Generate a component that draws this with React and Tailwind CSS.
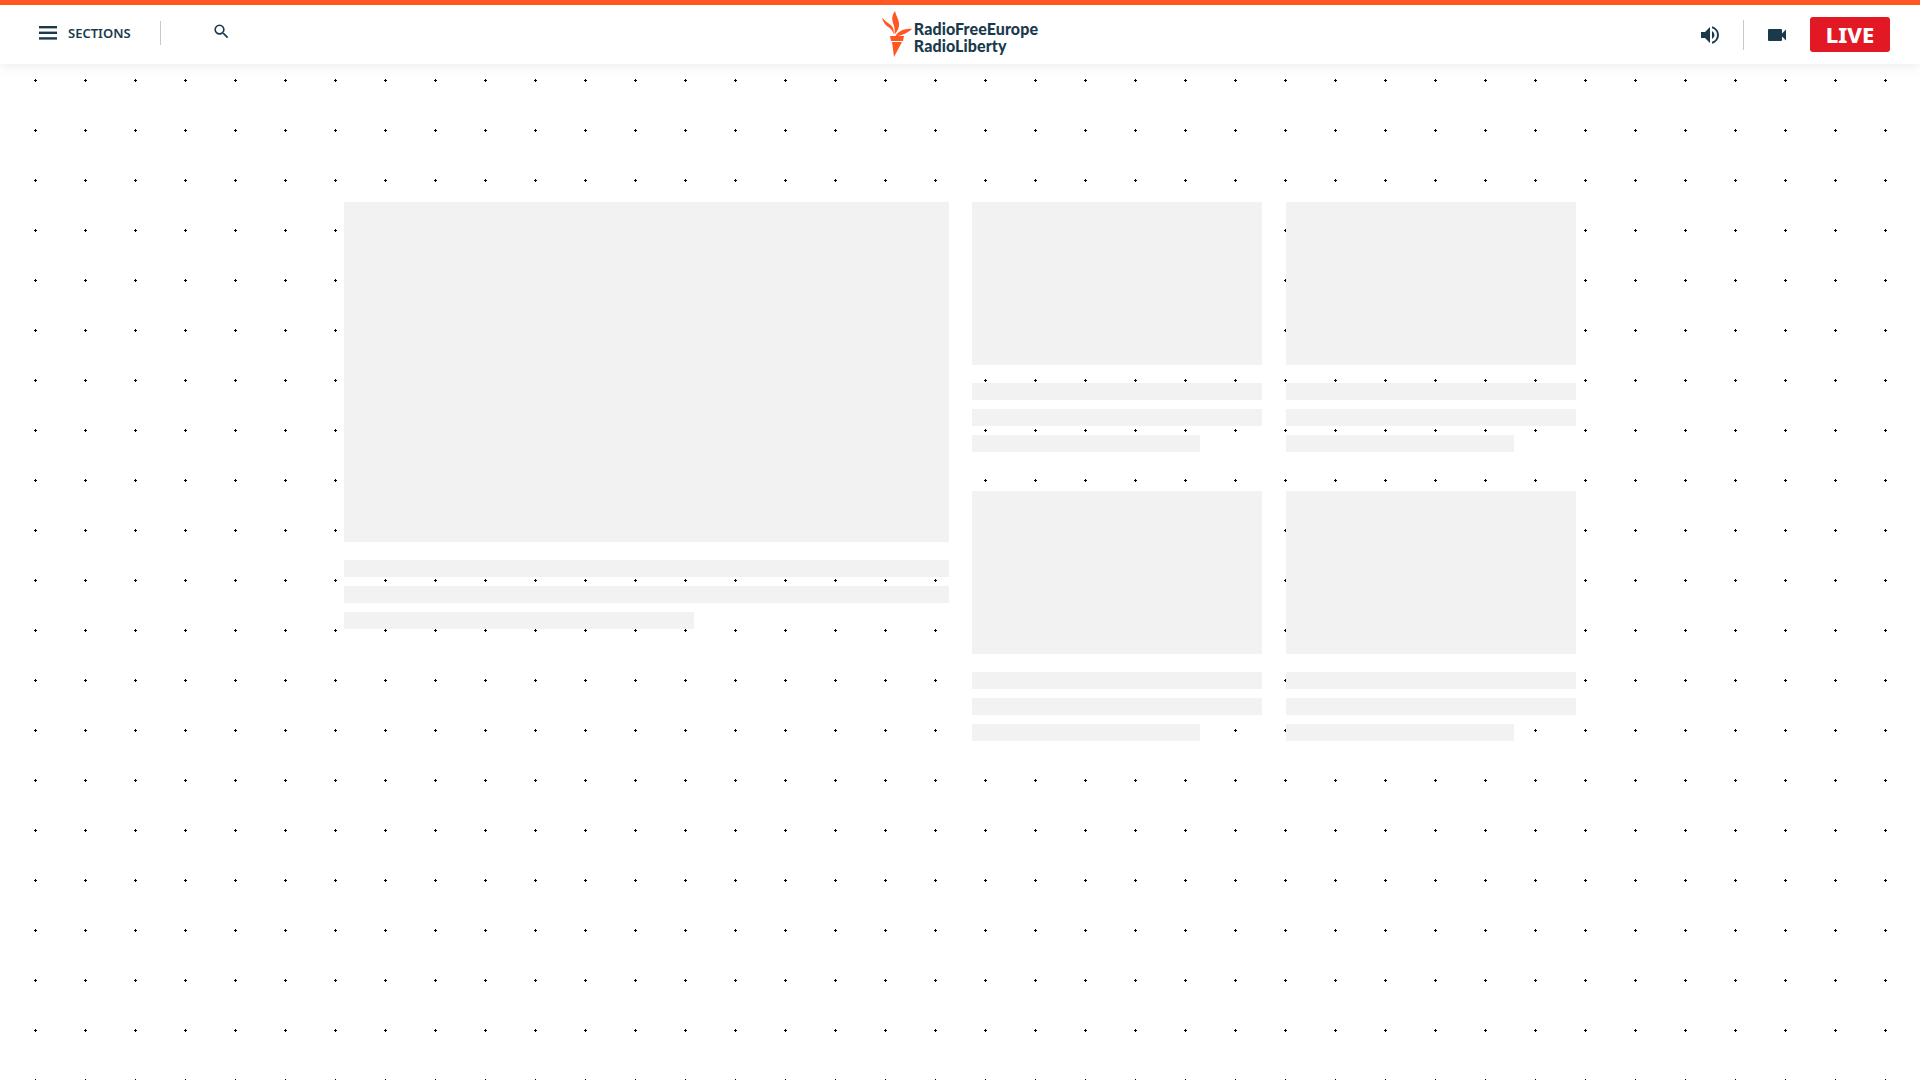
const TextBars = ({ short }) => (
  <div className="mt-[18px] flex flex-col gap-[9px]">
    <div className="h-[17px] bg-[#f2f2f2]" />
    <div className="h-[17px] bg-[#f2f2f2]" />
    <div className={`h-[17px] bg-[#f2f2f2] ${short}`} />
  </div>
);

const Card = () => (
  <div className="w-[290px]">
    <div className="h-[163px] bg-[#f2f2f2]" />
    <TextBars short="w-[228px]" />
  </div>
);

const Logo = () => (
  <div className="flex items-center gap-[2px]">
    <svg width="30" height="46" viewBox="0 0 30 46" className="-mt-[2px] shrink-0" fill="#ff5722">
      <path d="M13 0C10 4 9.5 8 11 12C12.5 15.5 13 19 12.5 23.5C15.5 20.5 17.5 16.5 17 12C16.5 8 14 4.5 13 0Z" />
      <path d="M0 6.5C1 11 3.5 14.5 7 16.5C9.5 18 11 20.5 11.5 23.5C12.5 19.5 11 15.5 8 13.5C5.5 11.5 2.5 9.5 0 6.5Z" />
      <path d="M30 18C25 17.5 21 18.5 18 20.5C16 21.5 14.5 23 13.5 25C18 25 23 23.5 30 18Z" />
      <path d="M8 25H22L21 30H9Z" />
      <path d="M10 31H20L12 46Z" />
    </svg>
    <div className="pt-[5px] font-['Lato',sans-serif] text-[16px] leading-[17px] font-black text-[#1a3a4c] tracking-[0.1px]">
      <div>RadioFreeEurope</div>
      <div>RadioLiberty</div>
    </div>
  </div>
);

export default function App() {
  return (
    <div className="min-h-[1080px] bg-white bg-[radial-gradient(circle_at_35.5px_30.5px,#000_1.2px,transparent_1.2px)] bg-[size:50px_50px] font-['Noto_Sans',sans-serif]">
      <header className="grid h-[64px] grid-cols-[1fr_auto_1fr] items-center border-t-[5px] border-[#ff5722] bg-white px-[30px] shadow-[0_2px_12px_rgba(0,0,0,0.08)]">
        <div className="flex items-center pb-[4px] pl-[9px]">
          <svg width="18" height="14" viewBox="0 0 18 14" fill="#1a3a4c">
            <rect y="0" width="18" height="2.4" />
            <rect y="5.6" width="18" height="2.4" />
            <rect y="11.2" width="18" height="2.4" />
          </svg>
          <span className="ml-[11px] mt-[3px] text-[13px] font-semibold text-[#1a3a4c]">SECTIONS</span>
          <div className="ml-[29px] h-[24px] w-px bg-[#c3c9ce]" />
          <svg className="ml-[51px] -mt-[2px]" width="19" height="19" viewBox="0 0 24 24" fill="#1a3a4c">
            <path d="M15.5 14h-.79l-.28-.27A6.47 6.47 0 0 0 16 9.5 6.5 6.5 0 1 0 9.5 16c1.61 0 3.09-.59 4.23-1.57l.27.28v.79l5 4.99L20.49 19l-4.99-5zm-6 0C7.01 14 5 11.99 5 9.5S7.01 5 9.5 5 14 7.01 14 9.5 11.99 14 9.5 14z" />
          </svg>
        </div>
        <Logo />
        <div className="flex items-center justify-end">
          <svg width="24" height="24" viewBox="0 0 24 24" fill="#1a3a4c">
            <path d="M3 9v6h4l5 5V4L7 9H3zm13.5 3A4.5 4.5 0 0 0 14 7.97v8.05A4.5 4.5 0 0 0 16.5 12zM14 3.23v2.06a7 7 0 0 1 0 13.42v2.06a9 9 0 0 0 0-17.54z" />
          </svg>
          <div className="ml-[21px] h-[30px] w-px bg-[#c3c9ce]" />
          <svg className="ml-[21px]" width="24" height="24" viewBox="0 0 24 24" fill="#1a3a4c">
            <path d="M17 10.5V7a1 1 0 0 0-1-1H4a1 1 0 0 0-1 1v10a1 1 0 0 0 1 1h12a1 1 0 0 0 1-1v-3.5l4 4v-11l-4 4z" />
          </svg>
          <div className="ml-[21px] flex h-[35px] w-[80px] items-center justify-center rounded-[3px] bg-[#e31825] text-[22px] font-extrabold text-white">LIVE</div>
        </div>
      </header>
      <main className="flex gap-[23px] pl-[344px] pt-[138px]">
        <div className="w-[605px]">
          <div className="h-[340px] bg-[#f2f2f2]" />
          <TextBars short="w-[350px]" />
        </div>
        <div className="grid grid-cols-[290px_290px] gap-x-[24px] gap-y-[39px]">
          <Card />
          <Card />
          <Card />
          <Card />
        </div>
      </main>
    </div>
  );
}
